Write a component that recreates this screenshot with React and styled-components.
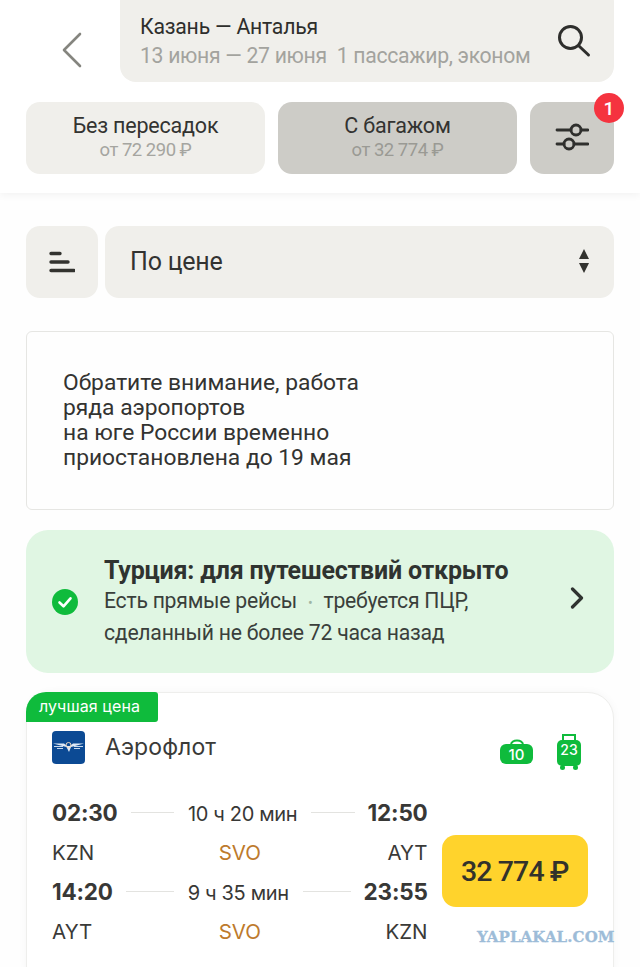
import React from 'react';
import styled, { createGlobalStyle } from 'styled-components';

const Global = createGlobalStyle`
  html, body { margin: 0; padding: 0; background: #fefefe; }
  body { font-family: Roboto, "Noto Sans", sans-serif; color: #2f2f2d; }
  * { box-sizing: border-box; }
`;
const Page = styled.div`width: 640px; height: 967px; overflow: hidden; position: relative; background: #fefefe;`;
const Header = styled.header`
  background: #fff; height: 193px; padding: 0 26px; display: flex; flex-direction: column; gap: 20px;
  box-shadow: 0 2px 8px rgba(0,0,0,.05);
`;
const SearchRow = styled.div`display: flex; align-items: stretch; height: 82px;`;
const Back = styled.div`width: 94px; display: flex; align-items: center; padding-left: 36px; padding-top: 17px;`;
const SearchBox = styled.div`
  flex: 1; height: 96px; margin-top: -14px; background: #f0efeb; border-radius: 16px;
  padding: 14px 23px 0 20px; display: flex; align-items: center; justify-content: space-between;
`;
const Route = styled.div`font-size: 21.2px; line-height: 29px; color: #2e2e2c; letter-spacing: -.2px;`;
const Sub = styled.div`font-size: 21.2px; line-height: 29px; color: #a3a39e; letter-spacing: -.3px; white-space: pre;`;
const Chips = styled.div`display: flex; gap: 13px;`;
const Chip = styled.div`
  flex: ${p => p.$icon ? '0 0 84px' : '1'}; height: 72px; border-radius: 14px; position: relative;
  background: ${p => p.$on ? '#cdccc7' : '#f0efeb'};
  display: flex; flex-direction: column; align-items: center; justify-content: center; padding-bottom: 3px;
`;
const ChipTitle = styled.div`font-size: 21.5px; line-height: 26px; letter-spacing: -.2px; color: #333331;`;
const ChipSub = styled.div`font-size: 18.5px; line-height: 22px; letter-spacing: -.5px; color: ${p => p.$on ? '#9a9a94' : '#a5a5a0'};`;
const Badge = styled.div`
  position: absolute; top: -9px; right: -10px; width: 30px; height: 30px; border-radius: 50%;
  background: #f5333f; color: #fff; font-size: 19px; font-weight: 500; display: flex; align-items: center; justify-content: center;
`;
const Main = styled.main`padding: 33px 26px 0; display: flex; flex-direction: column;`;
const SortRow = styled.div`display: flex; gap: 7px; height: 72px;`;
const SortBtn = styled.div`width: 72px; background: #f0efeb; border-radius: 14px; display: flex; align-items: center; justify-content: center;`;
const Select = styled.div`
  flex: 1; background: #f0efeb; border-radius: 14px; padding: 0 25px 2px 25px; display: flex; align-items: center; justify-content: space-between;
  font-size: 25px; letter-spacing: -.2px; color: #333331;
`;
const Notice = styled.div`
  margin-top: 33px; height: 179px; border: 1px solid #e6e6e3; border-radius: 6px; padding: 0 36px 2px;
  display: flex; align-items: center; font-size: 22.8px; line-height: 25px; color: #333331; letter-spacing: 0;
`;
const Turkey = styled.div`
  margin-top: 20px; height: 143px; background: #e0f6e3; border-radius: 22px; padding: 0 30px 0 26px;
  display: flex; align-items: center; gap: 26px;
`;
const TurkeyBody = styled.div`flex: 1;`;
const TurkeyTitle = styled.div`font-size: 25px; line-height: 30px; font-weight: 700; color: #2f3330; letter-spacing: -.2px;`;
const TurkeyText = styled.div`font-size: 21.2px; line-height: 29px; color: #3a3f3b; letter-spacing: -.25px; white-space: pre;`;
const Dot = styled.span`color: #9fb5a4; font-size: 14px; margin: 0 11px;`;
const ChevronWrap = styled.div`display: flex; margin-bottom: 8px;`;
const Card = styled.section`
  margin-top: 19px; height: 300px; background: #fff; border: 1px solid #eeeeec; border-radius: 26px; position: relative;
  box-shadow: 0 0 8px rgba(0,0,0,.04); padding: 38px 25px 0;
`;
const Best = styled.div`
  position: absolute; top: -1px; left: -1px; width: 132px; height: 30px; background: #0fbb3c; color: #fff;
  border-radius: 20px 3px 3px 0; font-family: Inter, sans-serif; font-size: 16px; line-height: 28px; padding-left: 13px; letter-spacing: .1px;
`;
const AirlineRow = styled.div`display: flex; align-items: center; height: 33px;`;
const Logo = styled.div`width: 33px; height: 33px; border-radius: 4px; background: #0c4a94; display: flex; align-items: center; justify-content: center;`;
const Airline = styled.div`margin-left: 20px; font-family: Inter, sans-serif; font-size: 23px; color: #3a3a38; letter-spacing: .1px; flex: 1; margin-top: -2px;`;
const Bags = styled.div`display: flex; align-items: flex-start; gap: 23px; margin-right: 7px; margin-top: 8px;`;
const BagSlot = styled.div`display: flex; margin-top: 6px;`;
const Flight = styled.div`display: flex; margin-top: 29px; align-items: center; gap: 14px;`;
const Legs = styled.div`width: 377px; display: flex; flex-direction: column; font-family: Inter, sans-serif;`;
const TimeRow = styled.div`display: flex; align-items: center; height: 39px; gap: 13px;`;
const Time = styled.div`font-size: 22.5px; font-weight: 700; color: #383836; letter-spacing: -.2px; line-height: 39px;`;
const Rule = styled.div`flex: 1; height: 1px; background: #e3e3e0;`;
const Dur = styled.div`font-size: 20px; color: #383836; letter-spacing: -.35px; padding: 2px 1px 0;`;
const CodeRow = styled.div`display: grid; grid-template-columns: 1fr auto 1fr; height: 40px; align-items: center; font-size: 20.5px; color: #3a3a38;`;
const Via = styled.div`color: #bd7a2c;`;
const Right = styled.div`text-align: right;`;
const Price = styled.div`
  width: 147px; height: 72px; background: #ffd32c; border-radius: 14px; margin-top: -2px;
  display: flex; align-items: center; justify-content: center; font-size: 28.5px; font-weight: 500; color: #33322b; letter-spacing: -.9px;
`;
const Watermark = styled.div`
  position: absolute; left: 477px; top: 929px; font-family: "DejaVu Serif", serif; font-weight: 700; font-size: 15px; line-height: 17px;
  color: #9dbcd8; letter-spacing: .1px; -webkit-text-stroke: .3px #9dbcd8;
`;

const SearchIcon = () => (
  <svg width="34" height="34" viewBox="0 0 34 34" fill="none" stroke="#2e2e2c" strokeWidth="3" strokeLinecap="round"><circle cx="13.5" cy="13.5" r="11"/><path d="M22 22l9.5 9"/></svg>
);
const BackIcon = () => (
  <svg width="20" height="36" viewBox="0 0 20 36" fill="none" stroke="#85857f" strokeWidth="2.6" strokeLinecap="round" strokeLinejoin="round"><path d="M18 2L2 18l16 16"/></svg>
);
const Sliders = () => (
  <svg width="34" height="30" viewBox="0 0 34 30" fill="none" stroke="#30302e" strokeWidth="2.8" strokeLinecap="round"><path d="M2 8h14M26 8h7M2 22h7M19 22h14"/><circle cx="21" cy="8" r="5"/><circle cx="14" cy="22" r="5"/></svg>
);
const SortIcon = () => (
  <svg width="26" height="22" viewBox="0 0 26 22" fill="none" stroke="#33332f" strokeWidth="3.4" strokeLinecap="round"><path d="M2 2.5h9M2 11h17M2 19.5h23"/></svg>
);
const Arrows = () => (
  <svg width="10" height="24" viewBox="0 0 10 24" fill="#33332f"><path d="M5 0l5 10H0zM5 24l5-10H0z"/></svg>
);
const Check = () => (
  <svg width="26" height="26" viewBox="0 0 26 26"><circle cx="13" cy="13" r="13" fill="#0fbb3c"/><path d="M7.5 13.5l4 3.8 7-8" fill="none" stroke="#fff" strokeWidth="2.6" strokeLinecap="round" strokeLinejoin="round"/></svg>
);
const Chevron = () => (
  <svg width="14" height="22" viewBox="0 0 14 22" fill="none" stroke="#2f3330" strokeWidth="3.2" strokeLinecap="round" strokeLinejoin="round"><path d="M2.5 2l9 9-9 9"/></svg>
);
const Plane = () => (
  <svg width="33" height="15" viewBox="0 0 33 15" fill="none"><path d="M1 3.5h11l3 2.5h3l3-2.5h11l-9 2.5-4 1-2 5-2.5-5-4-1z" fill="#dfe9f5"/><path d="M2 6.5h9M22 6.5h9M5 8.5h6M22 8.5h6" stroke="#c9d9ec" strokeWidth="1"/><circle cx="16.5" cy="5" r="2.5" fill="none" stroke="#f0d9c0" strokeWidth="1"/></svg>
);
const Bag = () => (
  <svg width="34" height="25" viewBox="0 0 34 25"><path d="M11 6c0-6 12-6 12 0" fill="none" stroke="#0fbb3c" strokeWidth="2"/><rect y="5" width="33" height="20" rx="6" fill="#0fbb3c"/><text x="16.5" y="21" textAnchor="middle" fontFamily="Inter, sans-serif" fontSize="15" fontWeight="500" fill="#fff">10</text></svg>
);
const Suitcase = () => (
  <svg width="24" height="37" viewBox="0 0 24 37"><path d="M6 8V2h12v6" fill="none" stroke="#0fbb3c" strokeWidth="2"/><rect y="7" width="24" height="26" rx="5" fill="#0fbb3c"/><circle cx="5.5" cy="34.5" r="2.5" fill="#0fbb3c"/><circle cx="18.5" cy="34.5" r="2.5" fill="#0fbb3c"/><text x="12" y="22" textAnchor="middle" fontFamily="Inter, sans-serif" fontSize="14" fontWeight="500" fill="#fff">23</text></svg>
);

export default function App() {
  return (
    <Page>
      <Global />
      <Header>
        <SearchRow>
          <Back><BackIcon /></Back>
          <SearchBox>
            <div>
              <Route>Казань — Анталья</Route>
              <Sub>13 июня — 27 июня  1 пассажир, эконом</Sub>
            </div>
            <SearchIcon />
          </SearchBox>
        </SearchRow>
        <Chips>
          <Chip><ChipTitle>Без пересадок</ChipTitle><ChipSub>от 72 290 ₽</ChipSub></Chip>
          <Chip $on><ChipTitle>С багажом</ChipTitle><ChipSub $on>от 32 774 ₽</ChipSub></Chip>
          <Chip $on $icon><Sliders /><Badge>1</Badge></Chip>
        </Chips>
      </Header>
      <Main>
        <SortRow>
          <SortBtn><SortIcon /></SortBtn>
          <Select>По цене<Arrows /></Select>
        </SortRow>
        <Notice>
          <div>Обратите внимание, работа<br />ряда аэропортов<br />на юге России временно<br />приостановлена до 19 мая</div>
        </Notice>
        <Turkey>
          <Check />
          <TurkeyBody>
            <TurkeyTitle>Турция: для путешествий открыто</TurkeyTitle>
            <TurkeyText>Есть прямые рейсы<Dot>•</Dot>требуется ПЦР,{'\n'}сделанный не более 72 часа назад</TurkeyText>
          </TurkeyBody>
          <ChevronWrap><Chevron /></ChevronWrap>
        </Turkey>
        <Card>
          <Best>лучшая цена</Best>
          <AirlineRow>
            <Logo><Plane /></Logo>
            <Airline>Аэрофлот</Airline>
            <Bags><BagSlot><Bag /></BagSlot><Suitcase /></Bags>
          </AirlineRow>
          <Flight>
            <Legs>
              <TimeRow><Time>02:30</Time><Rule /><Dur>10 ч 20 мин</Dur><Rule /><Time>12:50</Time></TimeRow>
              <CodeRow><div>KZN</div><Via>SVO</Via><Right>AYT</Right></CodeRow>
              <TimeRow><Time>14:20</Time><Rule /><Dur>9 ч 35 мин</Dur><Rule /><Time>23:55</Time></TimeRow>
              <CodeRow><div>AYT</div><Via>SVO</Via><Right>KZN</Right></CodeRow>
            </Legs>
            <Price>32 774 ₽</Price>
          </Flight>
        </Card>
      </Main>
      <Watermark>YAPLAKAL.COM</Watermark>
    </Page>
  );
}
